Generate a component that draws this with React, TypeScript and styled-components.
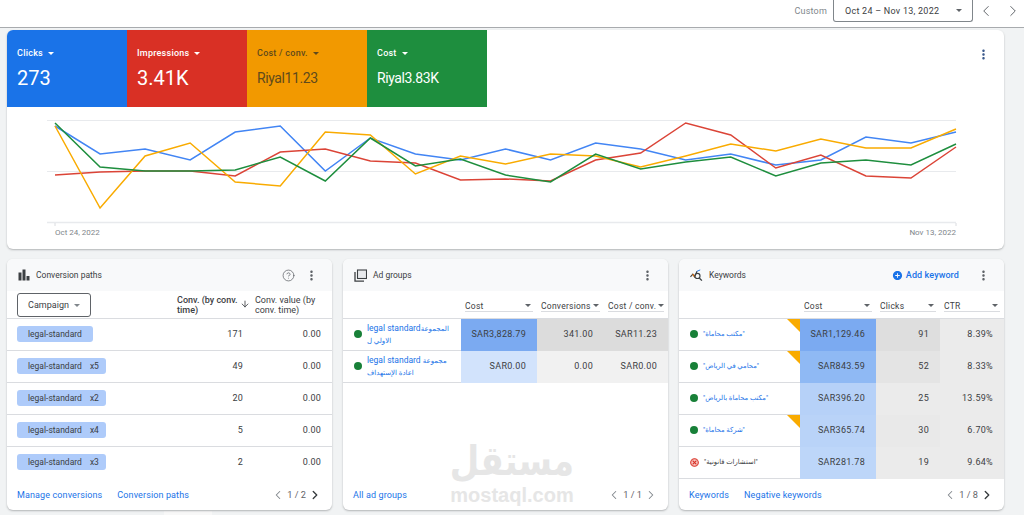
import styled, { createGlobalStyle } from 'styled-components';
import { ArrowDown, ChevronLeft, ChevronRight, CircleHelp } from 'lucide-react';
import { MdAddCircle, MdMoreVert } from 'react-icons/md';

const GlobalStyle = createGlobalStyle`
  *, *::after, *::before {
    box-sizing: border-box;
  }
  html, body {
    margin: 0;
    height: 515px;
    overflow: hidden;
    background: #f1f3f4;
    font-family: Roboto, "DejaVu Sans", sans-serif;
    font-size: 9px;
    color: #3c4043;
  }
`;

const CHART_X = Array.from({ length: 21 }, (_, i) => 48 + i * 45.05);

const series = [
  {
    color: '#4285f4',
    values: [126, 154, 149, 160, 132, 126, 171, 138, 154, 160, 149, 160, 143, 149, 160, 154, 165, 160, 137, 143, 132],
  },
  {
    color: '#db4437',
    values: [175, 172, 171, 171, 176, 152, 149, 161, 163, 180, 179, 181, 160, 153, 123, 135, 168, 155, 176, 178, 147],
  },
  {
    color: '#f9ab00',
    values: [126, 208, 156, 143, 182, 186, 132, 135, 174, 156, 164, 154, 156, 167, 156, 144, 151, 139, 148, 148, 129],
  },
  {
    color: '#1e8e3e',
    values: [123, 167, 171, 171, 170, 157, 181, 138, 166, 159, 175, 182, 154, 169, 162, 157, 176, 163, 160, 165, 144],
  },
];

const tiles = [
  { label: 'Clicks', value: '273', bg: '#1a73e8', fg: '#fff', big: true },
  { label: 'Impressions', value: '3.41K', bg: '#d93025', fg: '#fff', big: true },
  { label: 'Cost / conv.', value: 'Riyal11.23', bg: '#f29900', fg: '#5f4a1c', big: false },
  { label: 'Cost', value: 'Riyal3.83K', bg: '#1e8e3e', fg: '#fff', big: false },
];

const paths = [
  { repeat: '', conv: '171' },
  { repeat: 'x5', conv: '49' },
  { repeat: 'x2', conv: '20' },
  { repeat: 'x4', conv: '5' },
  { repeat: 'x3', conv: '2' },
];

const adGroups = [
  {
    latin: 'legal standard',
    arabic: 'المجموعة',
    second: 'الاولي ل',
    cost: 'SAR3,828.79',
    conv: '341.00',
    perConv: 'SAR11.23',
    costBg: '#7baaf1',
    restBg: '#dcdcdc',
  },
  {
    latin: 'legal standard ',
    arabic: 'مجموعة',
    second: 'اعادة الإستهداف',
    cost: 'SAR0.00',
    conv: '0.00',
    perConv: 'SAR0.00',
    costBg: '#d2e3fc',
    restBg: '#f1f1f1',
  },
];

const keywords = [
  { text: '"مكتب محاماة"', cost: 'SAR1,129.46', clicks: '91', ctr: '8.39%', costBg: '#7baaf1', clicksBg: '#dedede', ctrBg: '#ebebeb', flag: true, active: true },
  { text: '"محامي في الرياض"', cost: 'SAR843.59', clicks: '52', ctr: '8.33%', costBg: '#8fb9f4', clicksBg: '#e4e4e4', ctrBg: '#ebebeb', flag: true, active: true },
  { text: '"مكتب محاماة بالرياض"', cost: 'SAR396.20', clicks: '25', ctr: '13.59%', costBg: '#b6d1f8', clicksBg: '#ebebeb', ctrBg: '#ebebeb', flag: false, active: true },
  { text: '"شركة محاماة"', cost: 'SAR365.74', clicks: '30', ctr: '6.70%', costBg: '#b9d3f8', clicksBg: '#e9e9e9', ctrBg: '#ebebeb', flag: true, active: true },
  { text: '"استشارات قانونية"', cost: 'SAR281.78', clicks: '19', ctr: '9.64%', costBg: '#bdd6f9', clicksBg: '#ebebeb', ctrBg: '#ebebeb', flag: false, active: false },
];

function BarsIcon() {
  return (
    <svg width="12" height="12" viewBox="0 0 12 12">
      <rect x="0.5" y="3.5" width="3" height="8" fill="#3c4043" />
      <rect x="4.5" y="0.5" width="3" height="11" fill="#3c4043" />
      <rect x="8.5" y="7" width="3" height="4.5" fill="#3c4043" />
    </svg>
  );
}

function StackIcon() {
  return (
    <svg width="13" height="13" viewBox="0 0 13 13" fill="none" stroke="#3c4043">
      <rect x="3.5" y="1" width="9" height="8.5" strokeWidth="1.1" fill="#e8eaed" />
      <path d="M1 3v9.2h9" strokeWidth="1.3" />
    </svg>
  );
}

function KeywordIcon() {
  return (
    <svg width="13" height="13" viewBox="0 0 14 13" fill="none">
      <path d="M0.5 8 L3 5 L5 8 L7.5 2" stroke="#3c4043" strokeWidth="1.2" />
      <path d="M3 5 L5 8" stroke="#e8710a" strokeWidth="1.2" />
      <circle cx="8" cy="7" r="2.8" stroke="#3c4043" strokeWidth="1.2" />
      <path d="M10 9.2 L12.8 12" stroke="#3c4043" strokeWidth="1.4" />
      <path d="M7.5 2 L11 0.5" stroke="#1a73e8" strokeWidth="1" />
    </svg>
  );
}

function BlockedIcon() {
  return (
    <svg width="9" height="9" viewBox="0 0 9 9" fill="none">
      <circle cx="4.5" cy="4.5" r="3.8" stroke="#d93025" strokeWidth="1.1" fill="#f6c8c4" />
      <path d="M2.6 2.6l3.8 3.8M6.4 2.6L2.6 6.4" stroke="#d93025" strokeWidth="1.1" />
    </svg>
  );
}

function Pager({ label, more }: { label: string; more: boolean }) {
  return (
    <PagerWrap>
      <ChevronLeft size={14} strokeWidth={1.8} color="#80868b" />
      <span>{label}</span>
      <ChevronRight size={14} strokeWidth={more ? 2.4 : 1.8} color={more ? '#3c4043' : '#80868b'} />
    </PagerWrap>
  );
}

function App() {
  return (
    <>
      <GlobalStyle />
      <TopBar>
        <RangeLabel>Custom</RangeLabel>
        <RangeSelect>
          <span>Oct 24 – Nov 13, 2022</span>
          <Caret />
        </RangeSelect>
        <TopArrows>
          <ChevronLeft size={18} strokeWidth={1.3} color="#5f6368" />
          <ChevronRight size={18} strokeWidth={1.3} color="#5f6368" />
        </TopArrows>
      </TopBar>
      <Content>
        <ChartCard>
          <TileRow>
            {tiles.map((tile) => (
              <Tile key={tile.label} $bg={tile.bg} $fg={tile.fg}>
                <TileLabel>
                  {tile.label}
                  <Caret />
                </TileLabel>
                <TileValue $big={tile.big}>{tile.value}</TileValue>
              </Tile>
            ))}
            <ChartMenu>
              <MdMoreVert size={15} />
            </ChartMenu>
          </TileRow>
          <ChartSvg width="997" height="120" viewBox="0 0 997 120">
            <path d="M40 13.5H949M40 64.5H949" stroke="#e8eaed" strokeWidth="1" />
            <path d="M40 115.5H949" stroke="#e8eaed" strokeWidth="1.6" />
            <path d="M48 116v3M949 116v3" stroke="#dadce0" strokeWidth="1" />
            {series.map((line) => (
              <polyline
                key={line.color}
                points={line.values.map((v, i) => `${CHART_X[i]},${v - 107}`).join(' ')}
                fill="none"
                stroke={line.color}
                strokeWidth="1.5"
                strokeLinejoin="miter"
              />
            ))}
          </ChartSvg>
          <AxisRow>
            <span>Oct 24, 2022</span>
            <span>Nov 13, 2022</span>
          </AxisRow>
        </ChartCard>

        <CardGrid>
          <Card>
            <CardHeader>
              <BarsIcon />
              <CardTitle>Conversion paths</CardTitle>
              <HeaderActions>
                <CircleHelp size={13} strokeWidth={1.4} color="#5f6368" />
                <MdMoreVert size={15} color="#5f6368" />
              </HeaderActions>
            </CardHeader>
            <PathHead>
              <CampaignButton>
                Campaign
                <Caret />
              </CampaignButton>
              <BoldHead>
                <span>
                  Conv. (by conv.
                  <br />
                  time)
                </span>
                <ArrowDown size={10} strokeWidth={2} />
              </BoldHead>
              <PlainHead>
                Conv. value (by
                <br />
                conv. time)
              </PlainHead>
            </PathHead>
            {paths.map((path) => (
              <PathRow key={path.conv}>
                <Chip>
                  <span>legal-standard</span>
                  {path.repeat && <ChipCount>{path.repeat}</ChipCount>}
                </Chip>
                <ConvCell>{path.conv}</ConvCell>
                <ValueCell>0.00</ValueCell>
              </PathRow>
            ))}
            <CardFooter>
              <FooterLink>Manage conversions</FooterLink>
              <FooterLink>Conversion paths</FooterLink>
              <Pager label="1 / 2" more />
            </CardFooter>
          </Card>

          <Card>
            <CardHeader>
              <StackIcon />
              <CardTitle>Ad groups</CardTitle>
              <HeaderActions>
                <MdMoreVert size={15} color="#5f6368" />
              </HeaderActions>
            </CardHeader>
            <DataHead $columns="118px 76px 67px 64px">
              <span />
              <ColumnTitle>Cost<Caret /></ColumnTitle>
              <ColumnTitle>Conversions<Caret /></ColumnTitle>
              <ColumnTitle>Cost / conv.<Caret /></ColumnTitle>
            </DataHead>
            {adGroups.map((group) => (
              <DataRow key={group.cost} $columns="118px 76px 67px 64px">
                <NameCell>
                  <StatusDot />
                  <GroupName>
                    <span>
                      {group.latin}
                      <ArabicRun>{group.arabic}</ArabicRun>
                    </span>
                    <ArabicRun>{group.second}</ArabicRun>
                  </GroupName>
                </NameCell>
                <Metric $bg={group.costBg}>{group.cost}</Metric>
                <Metric $bg={group.restBg}>{group.conv}</Metric>
                <Metric $bg={group.restBg}>{group.perConv}</Metric>
              </DataRow>
            ))}
            <Watermark>
              <WatermarkArabic>مستقل</WatermarkArabic>
              <WatermarkLatin>mostaql.com</WatermarkLatin>
            </Watermark>
            <CardFooter>
              <FooterLink>All ad groups</FooterLink>
              <Pager label="1 / 1" more={false} />
            </CardFooter>
          </Card>

          <Card>
            <CardHeader>
              <KeywordIcon />
              <CardTitle>Keywords</CardTitle>
              <HeaderActions>
                <AddKeyword>
                  <MdAddCircle size={11} />
                  Add keyword
                </AddKeyword>
                <MdMoreVert size={15} color="#5f6368" />
              </HeaderActions>
            </CardHeader>
            <DataHead $columns="121px 76px 64px 64px">
              <span />
              <ColumnTitle>Cost<Caret /></ColumnTitle>
              <ColumnTitle>Clicks<Caret /></ColumnTitle>
              <ColumnTitle>CTR<Caret /></ColumnTitle>
            </DataHead>
            {keywords.map((keyword) => (
              <DataRow key={keyword.cost} $columns="121px 76px 64px 64px">
                <NameCell>
                  {keyword.active ? <StatusDot /> : <BlockedIcon />}
                  <KeywordText $active={keyword.active}>{keyword.text}</KeywordText>
                  {keyword.flag && <CornerFlag />}
                </NameCell>
                <Metric $bg={keyword.costBg}>{keyword.cost}</Metric>
                <Metric $bg={keyword.clicksBg}>{keyword.clicks}</Metric>
                <Metric $bg={keyword.ctrBg}>{keyword.ctr}</Metric>
              </DataRow>
            ))}
            <CardFooter>
              <FooterLink>Keywords</FooterLink>
              <FooterLink>Negative keywords</FooterLink>
              <Pager label="1 / 8" more />
            </CardFooter>
          </Card>
        </CardGrid>
        <BottomTab />
      </Content>
    </>
  );
}

export default App;

const Caret = styled.span`
  display: inline-block;
  width: 0;
  height: 0;
  margin-left: 5px;
  border-left: 3.5px solid transparent;
  border-right: 3.5px solid transparent;
  border-top: 3.5px solid currentColor;
  vertical-align: middle;
`;

const TopBar = styled.header`
  height: 28px;
  padding: 0 2px 6px 0;
  display: flex;
  align-items: flex-start;
  justify-content: flex-end;
  background: #fff;
  border-bottom: 1px solid #a8abae;
`;

const RangeLabel = styled.span`
  margin-top: 6px;
  margin-right: 6px;
  color: #80868b;
  letter-spacing: 0.2px;
`;

const RangeSelect = styled.div`
  width: 140px;
  height: 22px;
  padding: 0 10px 0 11px;
  display: flex;
  align-items: center;
  justify-content: space-between;
  border: 1px solid #80868b;
  border-top: 0;
  border-radius: 0 0 3px 3px;
  color: #3c4043;
  letter-spacing: 0.25px;

  ${Caret} {
    color: #5f6368;
  }
`;

const TopArrows = styled.div`
  margin-top: 2px;
  margin-left: 4px;
  width: 45px;
  display: flex;
  justify-content: space-between;
`;

const Content = styled.main`
  padding: 2px 20px 0 7px;
`;

const ChartCard = styled.section`
  height: 219px;
  background: #fff;
  border-radius: 6px;
  box-shadow: 0 1px 2px rgba(60, 64, 67, 0.35);
  overflow: hidden;
`;

const TileRow = styled.div`
  height: 77px;
  display: flex;
`;

const Tile = styled.div<{ $bg: string; $fg: string }>`
  width: 120px;
  padding: 17px 10px 0;
  background: ${(p) => p.$bg};
  color: ${(p) => p.$fg};
`;

const TileLabel = styled.div`
  line-height: 12px;
  font-weight: 500;
  letter-spacing: 0.25px;
`;

const TileValue = styled.div<{ $big: boolean }>`
  margin-top: 7px;
  line-height: 24px;
  font-size: ${(p) => (p.$big ? '20px' : '14px')};
  letter-spacing: ${(p) => (p.$big ? '0' : '-0.4px')};
`;

const ChartMenu = styled.div`
  margin-left: auto;
  margin-right: 13px;
  padding-top: 17px;
  color: #3c5a8c;
`;

const ChartSvg = styled.svg`
  display: block;
`;

const AxisRow = styled.div`
  padding: 0 48px;
  display: flex;
  justify-content: space-between;
  line-height: 12px;
  font-size: 8px;
  color: #80868b;
`;

const CardGrid = styled.div`
  margin-top: 10px;
  display: grid;
  grid-template-columns: repeat(3, 325px);
  column-gap: 11px;
`;

const Card = styled.section`
  position: relative;
  height: 251px;
  display: flex;
  flex-direction: column;
  background: #fff;
  border-radius: 6px;
  box-shadow: 0 1px 2px rgba(60, 64, 67, 0.35);
  overflow: hidden;
`;

const CardHeader = styled.div`
  height: 32px;
  flex: none;
  padding: 0 13px 0 11px;
  display: flex;
  align-items: center;
  background: #f8f9fa;
`;

const CardTitle = styled.h2`
  margin: 0 0 0 6px;
  font-size: 8.5px;
  font-weight: 400;
  color: #3c4043;
`;

const HeaderActions = styled.div`
  margin-left: auto;
  display: flex;
  align-items: center;
  gap: 9px;
`;

const AddKeyword = styled.span`
  margin-right: 8px;
  display: flex;
  align-items: center;
  gap: 3px;
  font-weight: 500;
  color: #1a73e8;
  letter-spacing: 0.1px;
`;

const PathHead = styled.div`
  height: 28px;
  flex: none;
  padding: 2px 0 0 10px;
  display: grid;
  grid-template-columns: 160px 78px 1fr;
  border-bottom: 1px solid #dadce0;
  line-height: 10px;
`;

const CampaignButton = styled.div`
  width: 74px;
  height: 24px;
  display: flex;
  align-items: center;
  justify-content: center;
  border: 1px solid #5f6368;
  border-radius: 3px;
  font-size: 9px;
  color: #3c4043;

  ${Caret} {
    color: #80868b;
  }
`;

const BoldHead = styled.div`
  padding: 2px 5px 0 0;
  display: flex;
  justify-content: space-between;
  font-weight: 500;
  color: #3c4043;

  svg {
    margin-top: 4px;
  }
`;

const PlainHead = styled.div`
  padding-top: 2px;
  color: #3c4043;
`;

const PathRow = styled.div`
  height: 32px;
  flex: none;
  padding: 0 0 1px 10px;
  display: grid;
  grid-template-columns: 1fr 55px 89px;
  align-items: center;
  border-bottom: 1px solid #dadce0;

  &:nth-of-type(7) {
    padding-bottom: 2px;
    border-bottom: 0;
  }
`;

const Chip = styled.div`
  width: fit-content;
  height: 16px;
  padding: 0 11px;
  display: flex;
  align-items: center;
  gap: 8px;
  background: #aecbfa;
  border-radius: 3px;
  font-size: 8.5px;
  color: #3c4043;
`;

const ChipCount = styled.span`
  margin-right: -4px;
`;

const ConvCell = styled.div`
  text-align: right;
  letter-spacing: 0.2px;
`;

const ValueCell = styled.div`
  padding-right: 11px;
  text-align: right;
  letter-spacing: 0.2px;
`;

const DataHead = styled.div<{ $columns: string }>`
  height: 28px;
  flex: none;
  display: grid;
  grid-template-columns: ${(p) => p.$columns};
  border-bottom: 1px solid #dadce0;
`;

const ColumnTitle = styled.div`
  margin: 9px 4px 6px;
  padding-right: 2px;
  display: flex;
  align-items: center;
  justify-content: space-between;
  border-bottom: 1px solid #dadce0;
  font-size: 8.5px;
  font-weight: 400;
  letter-spacing: 0.25px;
  white-space: nowrap;

  ${Caret} {
    margin-left: 2px;
    color: #5f6368;
  }
`;

const DataRow = styled.div<{ $columns: string }>`
  height: 32px;
  flex: none;
  display: grid;
  grid-template-columns: ${(p) => p.$columns};
  border-bottom: 1px solid #dadce0;
`;

const NameCell = styled.div`
  position: relative;
  padding: 0 0 1px 11px;
  display: flex;
  align-items: center;
  gap: 5px;
`;

const StatusDot = styled.span`
  width: 8px;
  height: 8px;
  flex: none;
  border-radius: 50%;
  background: #188038;
`;

const GroupName = styled.div`
  display: flex;
  flex-direction: column;
  font-size: 8.5px;
  line-height: 12px;
  color: #1a73e8;
  white-space: nowrap;
`;

const ArabicRun = styled.span`
  font-size: 7px;
`;

const KeywordText = styled.span<{ $active: boolean }>`
  font-size: 6.8px;
  color: ${(p) => (p.$active ? '#1a73e8' : '#3c4043')};
  white-space: nowrap;
`;

const CornerFlag = styled.span`
  position: absolute;
  top: 0;
  right: 0;
  width: 13px;
  height: 13px;
  background: #f9ab00;
  clip-path: polygon(0 0, 100% 0, 100% 100%);
`;

const Metric = styled.div<{ $bg: string }>`
  padding: 0 11px 2px 0;
  display: flex;
  align-items: center;
  justify-content: flex-end;
  background: ${(p) => p.$bg};
  margin-bottom: -1px;
  letter-spacing: 0.3px;
  color: #3c4043;
`;

const CardFooter = styled.div`
  margin-top: auto;
  height: 31px;
  flex: none;
  padding: 0 10px;
  display: flex;
  align-items: center;
  gap: 15px;
`;

const FooterLink = styled.span`
  color: #1a73e8;
  letter-spacing: 0.12px;
`;

const PagerWrap = styled.div`
  margin-left: auto;
  display: flex;
  align-items: center;
  gap: 2px;
  font-size: 9.2px;
  color: #5f6368;
`;

const Watermark = styled.div`
  position: absolute;
  left: 107px;
  top: 184px;
  width: 124px;
  display: flex;
  flex-direction: column;
  align-items: center;
  color: #e6e6e6;
  pointer-events: none;
`;

const WatermarkArabic = styled.div`
  height: 42px;
  font-family: "DejaVu Sans", sans-serif;
  font-size: 34px;
  font-weight: 700;
  line-height: 42px;
  transform: scaleY(1.2);
  transform-origin: center 85%;
`;

const WatermarkLatin = styled.div`
  font-family: "Liberation Sans", sans-serif;
  font-size: 20px;
  font-weight: 700;
  line-height: 20px;
`;

const BottomTab = styled.div`
  width: 48px;
  height: 4px;
  margin-top: 1px;
  margin-left: 157px;
  background: #f8f8f8;
`;
